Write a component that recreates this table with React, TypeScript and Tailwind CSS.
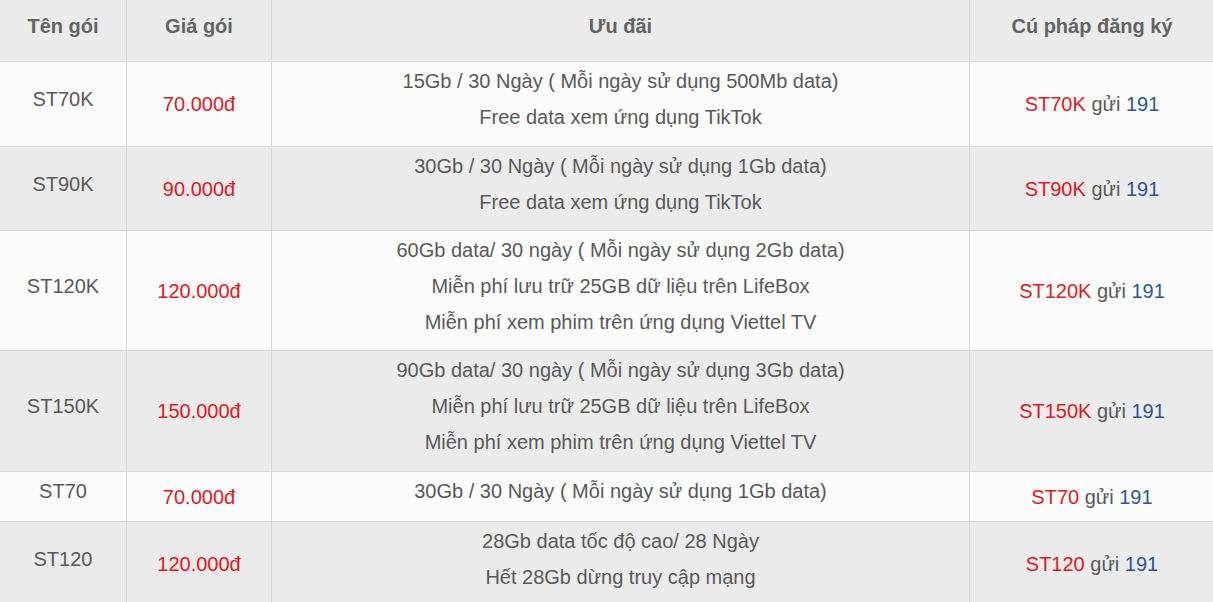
import React from "react";

type Row = { name: string; price: string; lines: string[]; code: string; gray: boolean; mb: string };

const rows: Row[] = [
  { name: "ST70K", price: "70.000đ", lines: ["15Gb / 30 Ngày ( Mỗi ngày sử dụng 500Mb data)", "Free data xem ứng dụng TikTok"], code: "ST70K", gray: false, mb: "mb-[10px]" },
  { name: "ST90K", price: "90.000đ", lines: ["30Gb / 30 Ngày ( Mỗi ngày sử dụng 1Gb data)", "Free data xem ứng dụng TikTok"], code: "ST90K", gray: true, mb: "mb-[9px]" },
  { name: "ST120K", price: "120.000đ", lines: ["60Gb data/ 30 ngày ( Mỗi ngày sử dụng 2Gb data)", "Miễn phí lưu trữ 25GB dữ liệu trên LifeBox", "Miễn phí xem phim trên ứng dụng Viettel TV"], code: "ST120K", gray: false, mb: "mb-[9px]" },
  { name: "ST150K", price: "150.000đ", lines: ["90Gb data/ 30 ngày ( Mỗi ngày sử dụng 3Gb data)", "Miễn phí lưu trữ 25GB dữ liệu trên LifeBox", "Miễn phí xem phim trên ứng dụng Viettel TV"], code: "ST150K", gray: true, mb: "mb-[10px]" },
  { name: "ST70", price: "70.000đ", lines: ["30Gb / 30 Ngày ( Mỗi ngày sử dụng 1Gb data)"], code: "ST70", gray: false, mb: "mb-[11px]" },
  { name: "ST120", price: "120.000đ", lines: ["28Gb data tốc độ cao/ 28 Ngày", "Hết 28Gb dừng truy cập mạng"], code: "ST120", gray: true, mb: "mb-[10px]" },
];

export default function App() {
  return (
    <div className="w-[1213px] h-[602px] overflow-hidden bg-white" style={{ fontFamily: '"Liberation Sans", Arial, sans-serif' }}>
      <table className="w-[1215px] border-collapse table-fixed text-[20px] leading-[36px] text-[#595959] -ml-px -mt-px">
        <colgroup>
          <col className="w-[127px]" />
          <col className="w-[145px]" />
          <col className="w-[698px]" />
          <col className="w-[245px]" />
        </colgroup>
        <thead>
          <tr className="bg-[#ebebeb] h-[62px]">
            {["Tên gói", "Giá gói", "Ưu đãi", "Cú pháp đăng ký"].map((h) => (
              <th key={h} className="border border-[#d9d9d9] p-px font-bold text-center align-middle text-[#636363]">
                <p className="mb-[10px]">{h}</p>
              </th>
            ))}
          </tr>
        </thead>
        <tbody>
          {rows.map((r) => (
            <tr key={r.name} className={r.gray ? "bg-[#ebebeb]" : "bg-[#fcfcfc]"}>
              <td className="border border-[#d9d9d9] p-px text-center align-middle">
                <p className={r.mb}>{r.name}</p>
              </td>
              <td className="border border-[#d9d9d9] p-px text-center align-middle text-[#e0191f]">{r.price}</td>
              <td className="border border-[#d9d9d9] p-px text-center align-middle">
                <div className={r.mb}>
                  {r.lines.map((l) => (
                    <p key={l}>{l}</p>
                  ))}
                </div>
              </td>
              <td className="border border-[#d9d9d9] p-px text-center align-middle">
                <span className="text-[#e0191f]">{r.code}</span> gửi <span className="text-[#2d5596]">191</span>
              </td>
            </tr>
          ))}
        </tbody>
      </table>
    </div>
  );
}
